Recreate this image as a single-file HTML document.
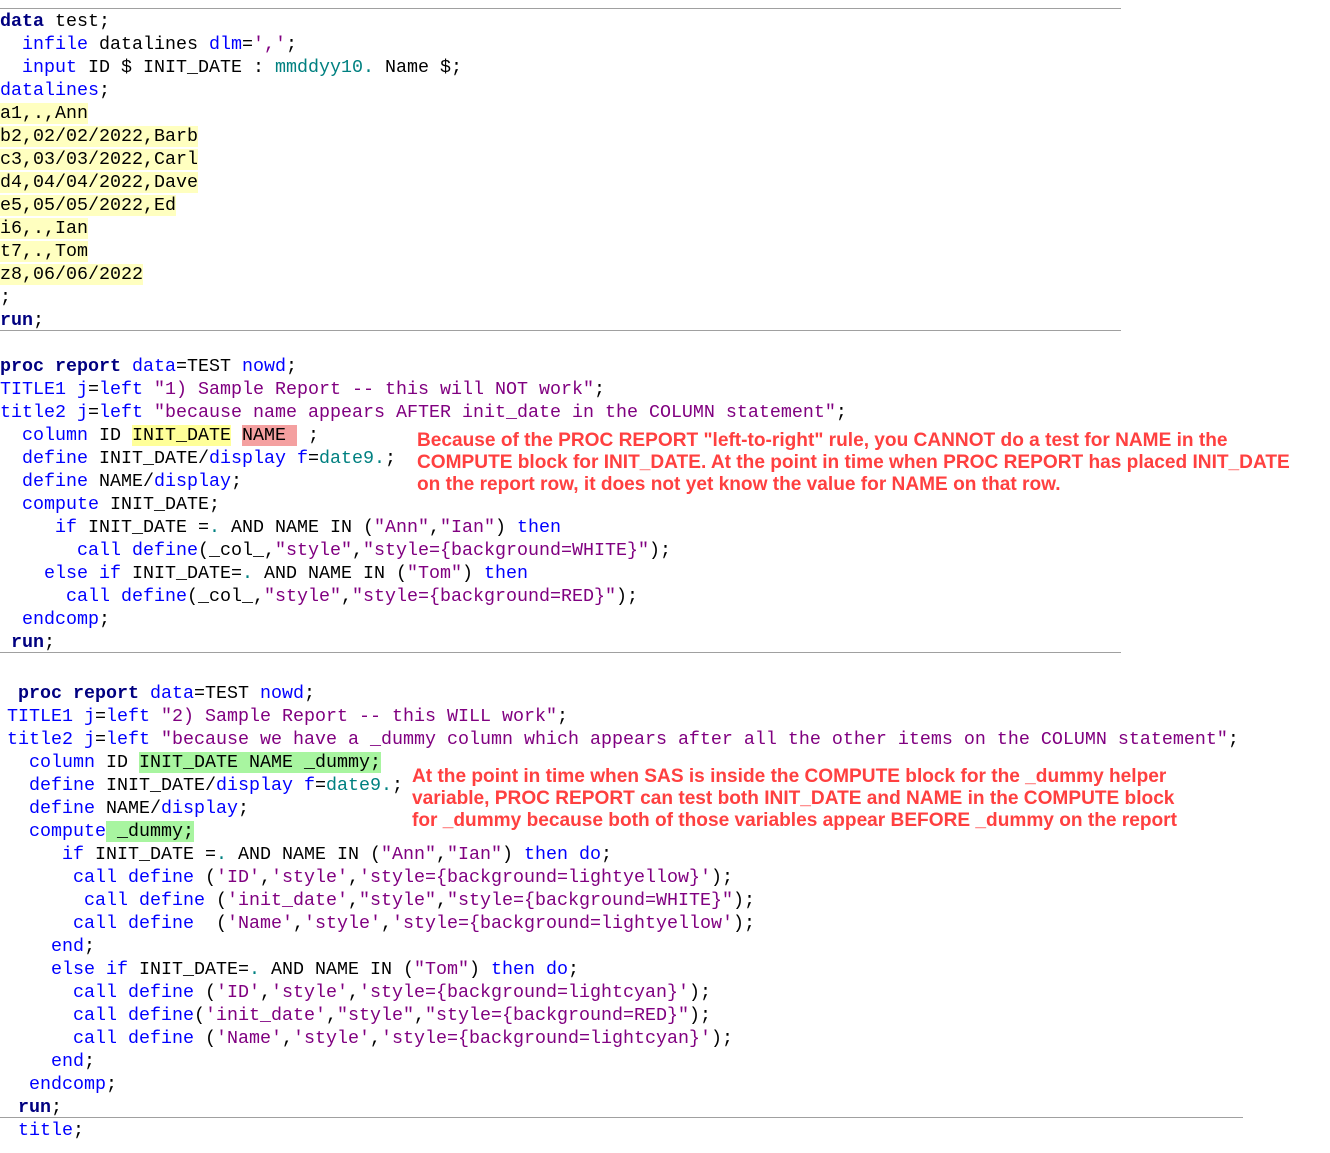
<!DOCTYPE html>
<html><head><meta charset="utf-8"><style>
body{margin:0;width:1330px;height:1153px;background:#fff;position:relative;overflow:hidden}
.c{position:absolute;left:0;margin:0;font-family:"Liberation Mono",monospace;font-size:18.34px;line-height:23px;color:#000;white-space:pre}
.k{color:#0000ff}.b{color:#000080;font-weight:bold}.s{color:#800080}.f{color:#008080}
.y{background:#ffffc0}.yy{background:#ffff99}.r{background:#f4a0a0}.g{background:#a8f5a0}
.hr{position:absolute;left:0;height:1px;background:#a0a0a0}
.t{position:absolute;font-family:"Liberation Sans",Arial,sans-serif;font-weight:bold;font-size:19.1px;line-height:22px;color:#ff4040;white-space:pre}
</style></head><body>
<div class="hr" style="top:8px;width:1121px"></div>
<div class="c" style="top:10px"><span class="b">data</span> test;
  <span class="k">infile</span> datalines <span class="k">dlm</span>=<span class="s">','</span>;
  <span class="k">input</span> ID $ INIT_DATE : <span class="f">mmddyy10.</span> Name $;
<span class="k">datalines</span>;
<span class="y">a1,.,Ann</span>
<span class="y">b2,02/02/2022,Barb</span>
<span class="y">c3,03/03/2022,Carl</span>
<span class="y">d4,04/04/2022,Dave</span>
<span class="y">e5,05/05/2022,Ed</span>
<span class="y">i6,.,Ian</span>
<span class="y">t7,.,Tom</span>
<span class="y">z8,06/06/2022</span>
;
<span class="b">run</span>;</div>
<div class="hr" style="top:330px;width:1121px"></div>
<div class="c" style="top:355px"><span class="b">proc report</span> <span class="k">data</span>=TEST <span class="k">nowd</span>;
<span class="k">TITLE1 j</span>=<span class="k">left</span> <span class="s">"1) Sample Report -- this will NOT work"</span>;
<span class="k">title2 j</span>=<span class="k">left</span> <span class="s">"because name appears AFTER init_date in the COLUMN statement"</span>;
  <span class="k">column</span> ID <span class="yy">INIT_DATE</span> <span class="r">NAME </span> ;
  <span class="k">define</span> INIT_DATE/<span class="k">display</span> <span class="k">f</span>=<span class="f">date9.</span>;
  <span class="k">define</span> NAME/<span class="k">display</span>;
  <span class="k">compute</span> INIT_DATE;
     <span class="k">if</span> INIT_DATE =<span class="f">.</span> AND NAME IN (<span class="s">"Ann"</span>,<span class="s">"Ian"</span>) <span class="k">then</span>
       <span class="k">call define</span>(_col_,<span class="s">"style"</span>,<span class="s">"style={background=WHITE}"</span>);
    <span class="k">else if</span> INIT_DATE=<span class="f">.</span> AND NAME IN (<span class="s">"Tom"</span>) <span class="k">then</span>
      <span class="k">call define</span>(_col_,<span class="s">"style"</span>,<span class="s">"style={background=RED}"</span>);
  <span class="k">endcomp</span>;
 <span class="b">run</span>;</div>
<div class="hr" style="top:652px;width:1121px"></div>
<div class="t" style="left:417px;top:430px">Because of the PROC REPORT "left-to-right" rule, you CANNOT do a test for NAME in the
COMPUTE block for INIT_DATE. At the point in time when PROC REPORT has placed INIT_DATE
on the report row, it does not yet know the value for NAME on that row.</div>
<div class="c" style="top:682px;left:7px"> <span class="b">proc report</span> <span class="k">data</span>=TEST <span class="k">nowd</span>;
<span class="k">TITLE1 j</span>=<span class="k">left</span> <span class="s">"2) Sample Report -- this WILL work"</span>;
<span class="k">title2 j</span>=<span class="k">left</span> <span class="s">"because we have a _dummy column which appears after all the other items on the COLUMN statement"</span>;
  <span class="k">column</span> ID <span class="g">INIT_DATE NAME _dummy;</span>
  <span class="k">define</span> INIT_DATE/<span class="k">display</span> <span class="k">f</span>=<span class="f">date9.</span>;
  <span class="k">define</span> NAME/<span class="k">display</span>;
  <span class="k">compute</span><span class="g"> _dummy;</span>
     <span class="k">if</span> INIT_DATE =<span class="f">.</span> AND NAME IN (<span class="s">"Ann"</span>,<span class="s">"Ian"</span>) <span class="k">then do</span>;
      <span class="k">call define</span> (<span class="s">'ID'</span>,<span class="s">'style'</span>,<span class="s">'style={background=lightyellow}'</span>);
       <span class="k">call define</span> (<span class="s">'init_date'</span>,<span class="s">"style"</span>,<span class="s">"style={background=WHITE}"</span>);
      <span class="k">call define</span>  (<span class="s">'Name'</span>,<span class="s">'style'</span>,<span class="s">'style={background=lightyellow'</span>);
    <span class="k">end</span>;
    <span class="k">else if</span> INIT_DATE=<span class="f">.</span> AND NAME IN (<span class="s">"Tom"</span>) <span class="k">then do</span>;
      <span class="k">call define</span> (<span class="s">'ID'</span>,<span class="s">'style'</span>,<span class="s">'style={background=lightcyan}'</span>);
      <span class="k">call define</span>(<span class="s">'init_date'</span>,<span class="s">"style"</span>,<span class="s">"style={background=RED}"</span>);
      <span class="k">call define</span> (<span class="s">'Name'</span>,<span class="s">'style'</span>,<span class="s">'style={background=lightcyan}'</span>);
    <span class="k">end</span>;
  <span class="k">endcomp</span>;
 <span class="b">run</span>;
 <span class="k">title</span>;</div>
<div class="hr" style="top:1117px;width:1243px"></div>
<div class="t" style="left:412px;top:766px">At the point in time when SAS is inside the COMPUTE block for the _dummy helper
variable, PROC REPORT can test both INIT_DATE and NAME in the COMPUTE block
for _dummy because both of those variables appear BEFORE _dummy on the report</div>
</body></html>
